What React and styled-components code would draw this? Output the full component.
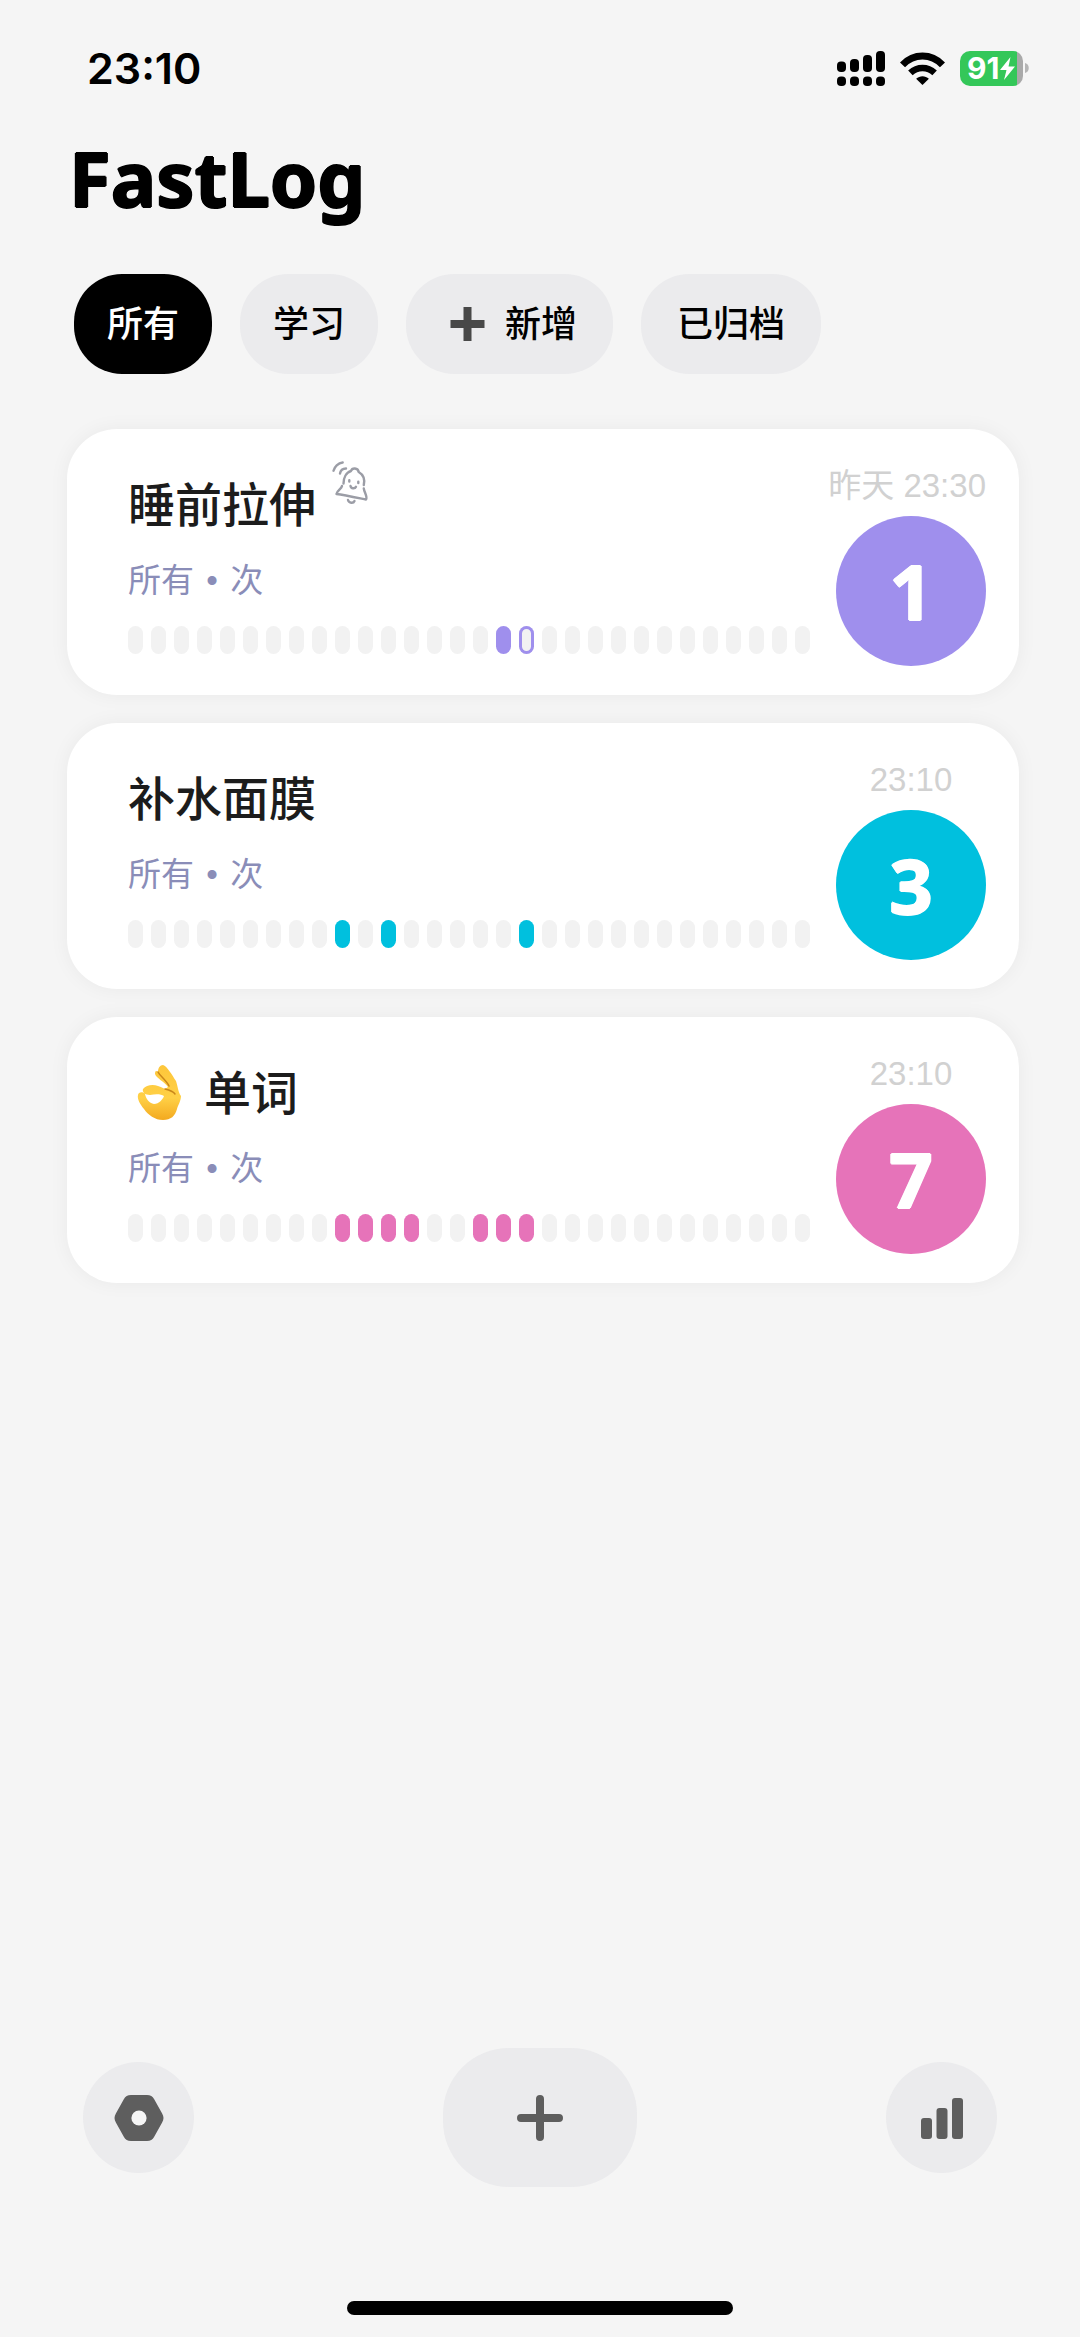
import React from "react";
import styled, { createGlobalStyle, css } from "styled-components";

const GlobalStyle = createGlobalStyle`
  *, *::before, *::after { box-sizing: border-box; }
  body {
    margin: 0;
    background: #f5f5f5;
    color: #000;
    font-family: Inter, "Noto Sans CJK SC", sans-serif;
  }
  button { font: inherit; color: inherit; border: 0; padding: 0; cursor: pointer; }
  h1, h2, p, ul { margin: 0; padding: 0; }
  svg { display: block; flex: none; }
`;

/* Display face: the shadows thicken glyphs evenly, which rounds their corners. */
const roundedDisplay = css`
  font-family: "Noto Sans", sans-serif;
  font-size: 76px;
  font-weight: 700;
  text-shadow: 1px 0, -1px 0, 0 1px, 0 -1px;
`;

const Page = styled.div`
  min-height: 100vh;
  display: flex;
  flex-direction: column;
`;

const StatusBar = styled.header`
  display: flex;
  align-items: center;
  justify-content: space-between;
  height: 136px;
  padding: 0 51px 0 87px;
`;

const Clock = styled.time`
  font-size: 43px;
  line-height: 48px;
  font-weight: 600;
`;

const StatusIcons = styled.div`
  display: flex;
  align-items: center;
  gap: 15px;
`;

const Battery = styled.div`
  display: flex;
  align-items: center;
  gap: 2px;
`;

const BatteryLevel = styled.div`
  display: flex;
  align-items: center;
  gap: 1px;
  width: 63px;
  height: 35px;
  padding-left: 7px;
  border-radius: 10px;
  background: linear-gradient(to right, #34c759 57px, #a9a9a9 57px);
  color: #fff;
  font-size: 30px;
  line-height: 35px;
  font-weight: 700;
`;

const Title = styled.h1`
  padding: 0 69px;
  ${roundedDisplay}
  line-height: 84px;
`;

const Chips = styled.nav`
  display: flex;
  flex-wrap: wrap;
  gap: 28px;
  padding: 54px 74px 0;
`;

const Chip = styled.button`
  display: flex;
  align-items: center;
  gap: 18px;
  height: 100px;
  padding: 0 ${(p) => (p.$wide ? 36 : 33)}px;
  border-radius: 48px;
  background: ${(p) => (p.$active ? "#000" : "#ebebed")};
  color: ${(p) => (p.$active ? "#fff" : "#000")};
  font-size: 36px;
  line-height: 48px;
  font-weight: 500;
`;

const List = styled.ul`
  display: flex;
  flex-direction: column;
  gap: 28px;
  padding: 55px 61px 0 67px;
  list-style: none;
`;

const Card = styled.li`
  display: flex;
  align-items: flex-start;
  justify-content: space-between;
  gap: 10px;
  height: 266px;
  padding: 36px 33px 0 61px;
  border-radius: 50px;
  background: #fff;
  box-shadow: 0 0 20px rgba(0, 0, 0, 0.05);
`;

const Info = styled.div`
  flex: 1;
  display: flex;
  flex-direction: column;
`;

const NameRow = styled.div`
  display: flex;
  align-items: center;
  gap: 16px;
  height: 80px;
`;

const Name = styled.h2`
  display: flex;
  align-items: center;
  gap: 20px;
  color: #1c1c1c;
  font-size: 47px;
  line-height: 80px;
  font-weight: 500;
`;

const BellSlot = styled.span`
  align-self: flex-start;
  margin-top: -4px;
`;

const Meta = styled.p`
  height: 81px;
  padding-top: 11px;
  color: #8a8db8;
  font-size: 33px;
  line-height: 48px;
`;

const Dot = styled.span`
  margin: 0 3px;
  font-family: "Liberation Sans", sans-serif;
`;

const Days = styled.div`
  display: flex;
  gap: 8px;
`;

const Day = styled.span`
  flex: 1;
  height: 28px;
  border-radius: 8px;
  background: #f2f2f2;
  ${(p) => p.$state === "done" && css`background: ${p.$color};`}
  ${(p) => p.$state === "today" && css`box-shadow: inset 0 0 0 3px ${p.$color};`}
`;

const Tally = styled.div`
  flex: none;
  display: flex;
  flex-direction: column;
  align-items: flex-end;
  width: 166px;
`;

const When = styled.time`
  min-width: 150px;
  height: 51px;
  color: #d1d1d1;
  font-family: "Liberation Sans", "Noto Sans CJK SC", sans-serif;
  font-size: 33px;
  line-height: 42px;
  text-align: center;
  white-space: nowrap;
`;

const Count = styled.button`
  width: 150px;
  height: 150px;
  border-radius: 50%;
  background: ${(p) => p.$color};
  color: #fff;
  ${roundedDisplay}
  line-height: 150px;
`;

const Toolbar = styled.footer`
  display: flex;
  align-items: center;
  justify-content: space-between;
  margin-top: auto;
  padding: 48px 83px 114px;
`;

const RoundButton = styled.button`
  display: grid;
  place-items: center;
  width: ${(p) => (p.$main ? 194 : 111)}px;
  height: ${(p) => (p.$main ? 139 : 111)}px;
  border-radius: 66px;
  background: #ebebed;
  color: #5e5e5e;
`;

const HomeBar = styled.div`
  align-self: center;
  width: 386px;
  height: 14px;
  margin-bottom: 22px;
  border-radius: 7px;
  background: #000;
`;

const Signal = () => (
  <svg width="48" height="35" viewBox="0 0 48 35" aria-hidden="true">
    <rect x="0" y="10.500" width="9" height="10.500" rx="4" />
    <rect x="13" y="8" width="9" height="13" rx="4" />
    <rect x="26" y="4" width="9" height="17" rx="4" />
    <rect x="39" y="0" width="9" height="21" rx="4" />
    {[0, 13, 26, 39].map((x) => (
      <rect key={x} x={x} y="25.500" width="9" height="9.500" rx="4" />
    ))}
  </svg>
);

const Wifi = () => (
  <svg width="45" height="33" viewBox="0 0 45 33" aria-hidden="true">
    <path d="M22.500 33l-6.400-6.200c3.600-3.400 9.200-3.400 12.800 0z" />
    <path d="M10.400 20.800C17.400 14.300 27.600 14.300 34.600 20.800" fill="none" stroke="#000" strokeWidth="6.600" />
    <path d="M2.500 12.900C13.800 1.100 31.200 1.100 42.500 12.900" fill="none" stroke="#000" strokeWidth="7" />
  </svg>
);

const Bolt = () => (
  <svg width="15" height="23" viewBox="0 0 15 23" fill="#fff" aria-hidden="true">
    <path d="M10.500 0L0 13h6.500L4 23 15 9.500H8.500z" />
  </svg>
);

const Bell = () => (
  <svg width="38" height="44" viewBox="0 0 38 44" fill="none" stroke="#9b9da6" strokeWidth="2.400" strokeLinecap="round" strokeLinejoin="round" role="img" aria-label="提醒">
    <path d="M1.500 9.700C2.500 6 6 2 10.700 1.500" />
    <path d="M8 12.500C8.500 9.500 11 7.500 14 7.500" />
    <path d="M11.500 22.500C11.500 17 14 11.500 19 10C20 6.500 26 6.500 26.700 11C31 13.500 33 18.500 31.800 24" />
    <path d="M10 25C9.500 28 5 29.500 4.500 33C12 34 24 36.500 34 38.500C36 36 32 31 31.800 27.500" />
    <path d="M16 39C17 42.500 21.500 42.500 22.500 40" />
    <path d="M17.300 19.200v1.400M26.300 20.700v1.400M18.500 25C19 27.800 23 28 24 25.800" />
  </svg>
);

const OkHand = () => (
  <svg width="56" height="60" viewBox="0 0 56 60" role="img" aria-label="OK">
    <defs>
      <linearGradient id="skin" x1="0" y1="0" x2="0" y2="1">
        <stop offset="0" stopColor="#fdc63a" />
        <stop offset="0.600" stopColor="#ffd046" />
        <stop offset="1" stopColor="#f3a91f" />
      </linearGradient>
    </defs>
    <path
      fill="url(#skin)"
      d="M30 9C30 5 32 2 35 2C39 3 44 12 48 18C50 24 50 29 53 33C53 38 50 42 49 46C47 53 43 57 35 57C27 57 20 52 16 46C12 41 9 36 10 32C10 29 15 28 17 31C18 36 21 40 26 41C31 41 35 36 36 33C33 31 28 31 22 32C17 32 14 29 15 26C18 22 25 21 30 23C33 24 35 25 37 26L40 24C37 19 28 15 27 11C27 8 28 7 30 9Z"
    />
    <path d="M30 9C32 13 38 17 41 23M37 26C41 27 45 28 47 31" stroke="#c9861a" strokeWidth="1.500" fill="none" strokeLinecap="round" />
  </svg>
);

const Nut = () => (
  <svg width="50" height="48" viewBox="0 0 50 48" aria-hidden="true">
    <path fill="currentColor" d="M17 1h16c3.500 0 5.500 1.200 7.200 4.200l7.800 14c2 3.500 2 6.100 0 9.600l-7.800 14c-1.700 3-3.700 4.200-7.200 4.200H17c-3.500 0-5.500-1.200-7.200-4.200l-7.800-14c-2-3.500-2-6.100 0-9.600l7.800-14C11.500 2.200 13.500 1 17 1z" />
    <circle cx="25" cy="24" r="7.600" fill="#f5f5f5" />
  </svg>
);

const Plus = () => (
  <svg width="46" height="46" viewBox="0 0 46 46" fill="none" stroke="currentColor" strokeWidth="8" strokeLinecap="round" aria-hidden="true">
    <path d="M23 4v38M4 23h38" />
  </svg>
);

const HeavyPlus = () => (
  <svg width="45" height="36" viewBox="0 0 45 36" fill="#484848" aria-hidden="true">
    <path d="M21.500 1h8v13h13v8h-13v13h-8v-13h-13v-8h13z" />
  </svg>
);

const Chart = () => (
  <svg width="42" height="42" viewBox="0 0 42 42" fill="currentColor" aria-hidden="true">
    <rect x="0" y="21" width="11" height="21" rx="3" />
    <rect x="15.500" y="11" width="11" height="31" rx="3" />
    <rect x="31" y="1" width="11" height="41" rx="3" />
  </svg>
);

const habits = [
  { name: "睡前拉伸", bell: true, when: "昨天 23:30", count: 1, color: "#9f8fed", done: [16], today: 17 },
  { name: "补水面膜", when: "23:10", count: 3, color: "#00c0de", done: [9, 11, 17] },
  { name: "单词", hand: true, when: "23:10", count: 7, color: "#e673b9", done: [9, 10, 11, 12, 15, 16, 17] },
];

function dayState(habit, day) {
  if (habit.done.includes(day)) return "done";
  return habit.today === day ? "today" : "empty";
}

function HabitCard({ habit }) {
  return (
    <Card>
      <Info>
        <NameRow>
          <Name>
            {habit.hand && <OkHand />}
            {habit.name}
          </Name>
          {habit.bell && <BellSlot><Bell /></BellSlot>}
        </NameRow>
        <Meta>所有 <Dot>•</Dot> 次</Meta>
        <Days>
          {Array.from({ length: 30 }, (_, day) => (
            <Day key={day} $state={dayState(habit, day)} $color={habit.color} />
          ))}
        </Days>
      </Info>
      <Tally>
        <When>{habit.when}</When>
        <Count $color={habit.color}>{habit.count}</Count>
      </Tally>
    </Card>
  );
}

export default function App() {
  return (
    <Page>
      <GlobalStyle />
      <StatusBar>
        <Clock>23:10</Clock>
        <StatusIcons>
          <Signal />
          <Wifi />
          <Battery>
            <BatteryLevel>91<Bolt /></BatteryLevel>
            <svg width="4" height="10" viewBox="0 0 4 10" fill="#b5b5b5" aria-hidden="true">
              <path d="M0 0c5 1 5 9 0 10z" />
            </svg>
          </Battery>
        </StatusIcons>
      </StatusBar>
      <Title>FastLog</Title>
      <Chips>
        <Chip $active>所有</Chip>
        <Chip>学习</Chip>
        <Chip $wide><HeavyPlus />新增</Chip>
        <Chip $wide>已归档</Chip>
      </Chips>
      <main>
        <List>
          {habits.map((habit) => <HabitCard key={habit.name} habit={habit} />)}
        </List>
      </main>
      <Toolbar>
        <RoundButton aria-label="设置"><Nut /></RoundButton>
        <RoundButton $main aria-label="新增"><Plus /></RoundButton>
        <RoundButton aria-label="统计"><Chart /></RoundButton>
      </Toolbar>
      <HomeBar />
    </Page>
  );
}
